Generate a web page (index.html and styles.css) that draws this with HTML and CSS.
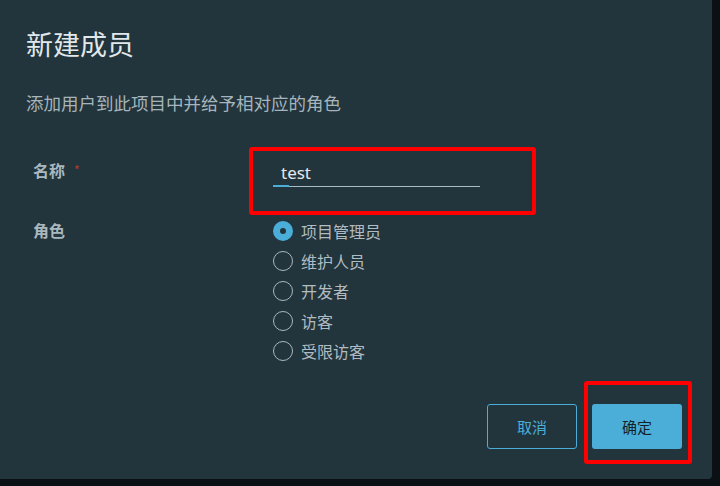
FILE: index.html
```html
<!DOCTYPE html>
<html lang="zh">
<head>
<meta charset="utf-8">
<link rel="stylesheet" href="styles.css">
</head>
<body>
<div class="dialog">
  <h1 class="title">新建成员</h1>
  <p class="subtitle">添加用户到此项目中并给予相对应的角色</p>
  <div class="form">
    <div class="label label-name">名称<span class="req">*</span></div>
    <div class="mark mark-input">
      <div class="input">
        <span class="value">test</span>
        <span class="focus-bar"></span>
      </div>
    </div>
    <div class="label label-role">角色</div>
    <div class="radios">
      <label class="radio checked"><span class="dot"></span><span>项目管理员</span></label>
      <label class="radio"><span class="dot"></span><span>维护人员</span></label>
      <label class="radio"><span class="dot"></span><span>开发者</span></label>
      <label class="radio"><span class="dot"></span><span>访客</span></label>
      <label class="radio"><span class="dot"></span><span>受限访客</span></label>
    </div>
  </div>
  <div class="footer">
    <button class="btn btn-outline">取消</button>
    <div class="mark mark-btn">
      <button class="btn btn-primary">确定</button>
    </div>
  </div>
</div>
</body>
</html>
```

FILE: styles.css
```css
html, body {
  margin: 0;
  padding: 0;
  background: #0a1014;
}
body {
  width: 720px;
  height: 486px;
  overflow: hidden;
  font-family: "Noto Sans CJK SC", "Noto Sans", sans-serif;
}
.dialog {
  box-sizing: border-box;
  width: 712px;
  height: 479px;
  background: #22343c;
  border-radius: 0 0 4px 0;
  padding: 26px 20px 15px 26px;
  display: flex;
  flex-direction: column;
}
.title {
  margin: 0;
  font-size: 27px;
  line-height: 36px;
  font-weight: 400;
  color: #e1e8eb;
}
.subtitle {
  margin: 29px 0 0 0;
  font-size: 17.5px;
  line-height: 24px;
  color: #a6b5bc;
}
.form {
  margin-top: 32px;
  display: grid;
  grid-template-columns: 223px 287px;
  row-gap: 1px;
}
.label {
  padding-left: 7px;
  font-size: 16px;
  line-height: 24px;
  font-weight: 700;
  color: #a9b8bf;
  display: flex;
  align-items: flex-start;
}
.label-name { padding-top: 11px; }
.label-role { padding-top: 2px; }
.req {
  color: #c0392b;
  font-size: 12px;
  line-height: 24px;
  margin-left: 9px;
  font-weight: 400;
}
.mark {
  border: 4px solid #ff0000;
  border-radius: 3px;
  box-sizing: border-box;
}
.mark-input {
  height: 68px;
  padding: 9px 0 0 20px;
}
.input {
  position: relative;
  width: 199px;
  height: 26px;
  border-bottom: 1px solid #a9bcc4;
  padding-left: 8px;
  box-sizing: content-box;
}
.value {
  font-family: "Noto Sans", "Open Sans", sans-serif;
  font-size: 17px;
  line-height: 24px;
  color: #e3e9ec;
}
.focus-bar {
  position: absolute;
  left: 0;
  bottom: -1px;
  width: 16px;
  height: 2px;
  background: #4aaed9;
}
.radios {
  padding-left: 24px;
  display: flex;
  flex-direction: column;
}
.radio {
  height: 30px;
  display: flex;
  align-items: center;
  gap: 8px;
  font-size: 16px;
  color: #b0bcc2;
}
.dot {
  box-sizing: border-box;
  width: 20px;
  height: 20px;
  border-radius: 50%;
  border: 1.5px solid #a9b8bf;
  display: flex;
  align-items: center;
  justify-content: center;
}
.radio.checked .dot {
  border: none;
  background: #4aaed9;
}
.radio.checked .dot::after {
  content: "";
  width: 6px;
  height: 6px;
  border-radius: 50%;
  background: #22343c;
}
.footer {
  margin-top: auto;
  display: flex;
  justify-content: flex-end;
  align-items: flex-start;
  gap: 7px;
}
.btn {
  box-sizing: border-box;
  width: 90px;
  height: 45px;
  border-radius: 3px;
  font-family: "Noto Sans CJK SC", sans-serif;
  font-size: 15px;
  cursor: pointer;
}
.btn-outline {
  margin-top: 23px;
  background: transparent;
  border: 1px solid #4aaed9;
  color: #4aaed9;
}
.mark-btn {
  width: 108px;
  height: 83px;
  padding: 19px 0 0 4px;
}
.btn-primary {
  background: #4aaed9;
  border: none;
  color: #14232a;
}
```
